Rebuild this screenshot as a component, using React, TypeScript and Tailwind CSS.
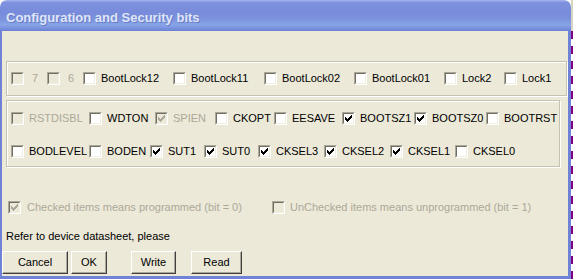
import React from "react";
import clsx from "clsx";

type CheckProps = {
  label: string;
  checked?: boolean;
  disabled?: boolean;
  w?: string;
  gap?: string;
};

const font = "font-['Liberation_Sans',Arial,sans-serif]";

const Box: React.FC<{ checked?: boolean; disabled?: boolean }> = ({ checked, disabled }) => (
  <span className="box-border flex h-[13px] w-[13px] shrink-0 border border-t-[#aca899] border-l-[#aca899] border-r-white border-b-white">
    <span
      className={clsx(
        "flex flex-1 items-center justify-center border border-t-[#716f64] border-l-[#716f64] border-r-[#f1efe2] border-b-[#f1efe2]",
        disabled ? "bg-[#ece9d8]" : "bg-white",
      )}
    >
      {checked && (
        <svg width="7" height="7" viewBox="0 0 7 7" shapeRendering="crispEdges">
          {[2, 3, 4, 3, 2, 1, 0].map((y, x) => (
            <rect key={x} x={x} y={y} width="1" height="3" fill={disabled ? "#aca899" : "#000"} />
          ))}
        </svg>
      )}
    </span>
  </span>
);

const Check: React.FC<CheckProps> = ({ label, checked, disabled, w, gap = "gap-[5px]" }) => (
  <div className={clsx("flex shrink-0 items-center", gap, w)}>
    <Box checked={checked} disabled={disabled} />
    <span
      className={clsx(
        "whitespace-nowrap text-[11px] leading-[13px]",
        disabled ? "text-[#aca899]" : "text-black",
      )}
    >
      {label}
    </span>
  </div>
);

const Btn: React.FC<{ label: string; className: string }> = ({ label, className }) => (
  <button
    className={clsx(
      "box-border h-[23px] shrink-0 border border-t-white border-l-white border-r-[#404040] border-b-[#404040] bg-[#ece9d8] text-[11px] text-black shadow-[inset_-1px_-1px_0_#aca899]",
      className,
    )}
  >
    {label}
  </button>
);

const groupBox =
  "box-border border border-[#c5c2b2] shadow-[inset_1px_1px_0_#ffffff,1px_1px_0_#ffffff]";

export default function App() {
  return (
    <div className={clsx("flex h-[279px] w-[573px] overflow-hidden bg-white", font)}>
      <div className="flex w-[571px] shrink-0 flex-col">
        {/* title bar */}
        <div className="flex h-[31px] shrink-0 items-start rounded-t-[7px] bg-[linear-gradient(to_bottom,#a7b8ee_0%,#7f92de_8%,#788bdb_40%,#7d93de_62%,#89a4e6_80%,#7c94e0_90%,#6b80d6_100%)] pl-[6px] pt-[10px]">
          <span className="text-[13px] font-bold leading-[15px] text-[#dfe6f8] [text-shadow:1px_1px_0_#6a7cc8]">
            Configuration and Security bits
          </span>
        </div>

        {/* body */}
        <div className="flex flex-1 flex-col border-b-[3px] border-l-2 border-r-[3px] border-[#6f82d8] bg-[#ece9d8]">
          <div className={clsx(groupBox, "ml-[4px] mr-[1px] mt-[30px] flex pb-[10px] pl-[4px] pt-[10px]")}>
            <Check label="7" disabled w="w-[36px]" gap="gap-[8px]" />
            <Check label="6" disabled w="w-[36px]" gap="gap-[8px]" />
            <Check label="BootLock12" w="w-[90px]" />
            <Check label="BootLock11" w="w-[91px]" />
            <Check label="BootLock02" w="w-[90px]" />
            <Check label="BootLock01" w="w-[90px]" />
            <Check label="Lock2" w="w-[60px]" />
            <Check label="Lock1" />
          </div>

          <div className={clsx(groupBox, "ml-[4px] mt-[4px] flex w-[554px] flex-col gap-[20px] pb-[8px] pl-[4px] pt-[11px]")}>
            <div className="flex">
              <Check label="RSTDISBL" disabled w="w-[78px]" />
              <Check label="WDTON" w="w-[66px]" />
              <Check label="SPIEN" disabled checked w="w-[60px]" />
              <Check label="CKOPT" w="w-[59px]" />
              <Check label="EESAVE" w="w-[68px]" />
              <Check label="BOOTSZ1" checked w="w-[72px]" />
              <Check label="BOOTSZ0" checked w="w-[72px]" />
              <Check label="BOOTRST" />
            </div>
            <div className="flex">
              <Check label="BODLEVEL" w="w-[78px]" />
              <Check label="BODEN" w="w-[61px]" />
              <Check label="SUT1" checked w="w-[54px]" />
              <Check label="SUT0" checked w="w-[54px]" />
              <Check label="CKSEL3" checked w="w-[66px]" />
              <Check label="CKSEL2" checked w="w-[66px]" />
              <Check label="CKSEL1" checked w="w-[65px]" />
              <Check label="CKSEL0" />
            </div>
          </div>

          <div className="ml-[6px] mt-[34px] flex">
            <Check label="Checked items means programmed (bit = 0)" disabled checked w="w-[264px]" gap="gap-[6px]" />
            <Check label="UnChecked items means unprogrammed (bit = 1)" disabled />
          </div>

          <div className="ml-[4px] mt-[16px] text-[11px] leading-[13px] text-black">
            Refer to device datasheet, please
          </div>

          <div className="mt-[8px] flex">
            <Btn label="Cancel" className="w-[66px]" />
            <Btn label="OK" className="ml-[3px] w-[36px]" />
            <Btn label="Write" className="ml-[24px] w-[45px]" />
            <Btn label="Read" className="ml-[15px] w-[51px]" />
          </div>
        </div>
      </div>

      {/* desktop strip to the right */}
      <div className="flex w-[2px] flex-col">
        <div className="h-[31px] bg-[#d8d4c4]" />
        <div className="flex-1 bg-[repeating-linear-gradient(to_bottom,#800080_0px,#800080_8px,#ffffff_8px,#ffffff_15px)]" />
      </div>
    </div>
  );
}
